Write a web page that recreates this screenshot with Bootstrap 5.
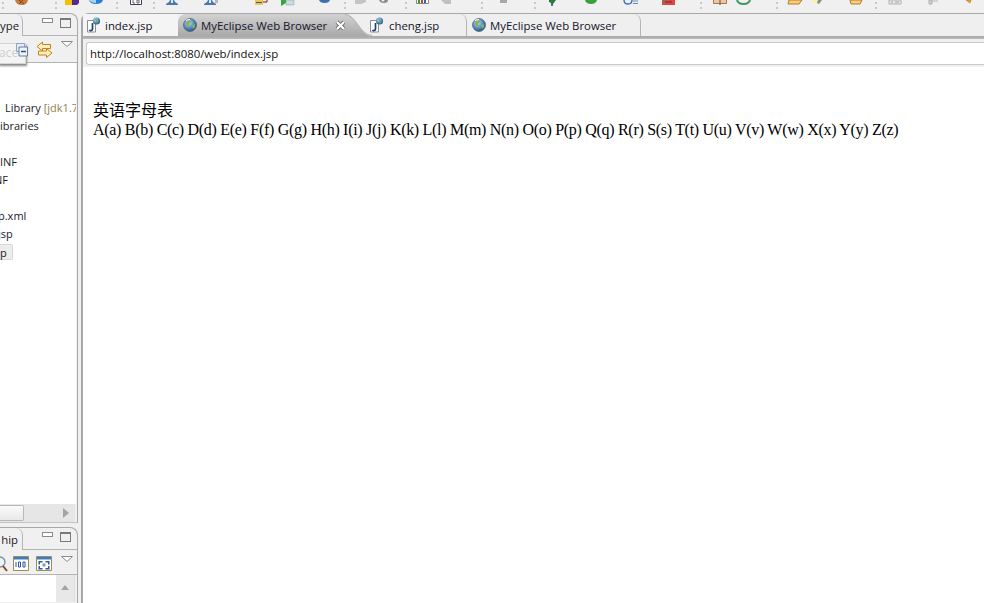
<!DOCTYPE html>
<html lang="en">
<head>
<meta charset="UTF-8">
<title>MyEclipse Web Browser</title>
<link href="https://cdn.jsdelivr.net/npm/bootstrap@5.3.0/dist/css/bootstrap.min.css" rel="stylesheet">
<style>
    html, body { height: 100%; }
    body { background: #f0f0f0; overflow: hidden; font-family: "Open Sans", "Liberation Sans", sans-serif; font-size: 11px; color: #1a1a2a; }
    .tool-strip { height: 13px; display: block; }
    .work-area { height: 590px; }

    /* left column, views */
    .left-col { width: 78px; }
    .view-pane { border: 1px solid #a8a8a8; border-left: 0; border-bottom: 0; border-top-right-radius: 8px; background: #f0f0f0; }
    .view-top { height: 510px; border-bottom: 1px solid #c4c4c4; }
    .view-bottom { margin-top: 4px; height: 76px; }
    .view-head { height: 22px; border-bottom: 1px solid #b4b4b4; }
    .view-tab { width: 23px; height: 22px; margin-bottom: -1px; background: #f0f0f0; border-right: 1px solid #b4b4b4; border-top-right-radius: 7px; line-height: 24px; font-size: 11.4px; overflow: hidden; position: relative; z-index: 1; }
    .min-btn { width: 11px; height: 5px; border: 1px solid #8a8a8a; background: #fff; margin-left: 19px; margin-top: 4px; }
    .max-btn { width: 11px; height: 10px; border: 1px solid #7a7a7a; border-top-width: 2px; margin-left: 7px; margin-top: 4px; }
    .view-tools { height: 27px; border-bottom: 1px solid #b4b4b4; position: relative; }
    .view-tools-low { height: 25px; }
    .sync-icon { position: absolute; left: 36px; top: 5px; }
    .drop-icon { position: absolute; left: 61px; top: 5px; }
    .float-box { position: absolute; left: -2px; top: 7px; width: 28px; height: 21px; background: #f4f4f4; border: 1px solid #d4d4d4; box-shadow: 1px 2px 2px #8a8a8a; color: #cfcfcf; line-height: 17px; font-size: 12px; z-index: 2; overflow: hidden; }
    .collapse-icon { position: absolute; left: 15px; top: 7px; z-index: 3; }
    .mini-icons { position: absolute; left: 0; top: 5px; }

    .tree-box { height: 441px; background: #fff; margin-right: 1px; padding-top: 36px; }
    .tree-row { height: 18px; line-height: 18px; white-space: nowrap; overflow: hidden; }
    .indent-a { padding-left: 5px; }
    .cut-1 { text-indent: -2px; }
    .cut-2 { text-indent: -6px; }
    .jdk-tag { color: #96804e; }
    .picked-row { display: inline-block; width: 13px; height: 16px; line-height: 15px; background: #ececec; border: 1px solid #d8d8d8; border-left: 0; border-radius: 0 2px 2px 0; vertical-align: top; margin-top: 1px; }
    .h-scroll { height: 18px; background: #e6e6e6; margin-right: 2px; position: relative; }
    .h-thumb { width: 24px; height: 16px; background: linear-gradient(#fafafa, #e8e8e8); border: 1px solid #b8b8b8; border-left: 0; border-radius: 0 2px 2px 0; }
    .h-arrow { width: 0; height: 0; border-left: 6px solid #a4a4a4; border-top: 5px solid transparent; border-bottom: 5px solid transparent; margin: 0 6px 0 auto; }
    .lower-box { height: 27px; background: #fff; margin-right: 2px; border-right: 1px solid #ddd; }
    .v-scroll { width: 18px; background: #e8e8e8; margin-left: auto; padding-top: 10px; }
    .v-arrow { width: 0; height: 0; border-bottom: 5px solid #a4a4a4; border-left: 4px solid transparent; border-right: 4px solid transparent; margin: 0 auto; }

    /* editor */
    .editor-pane { margin-left: 3px; width: 903px; border-top: 1px solid #a8a8a8; border-left: 2px solid #a8a8a8; border-top-left-radius: 8px; background: #fff; }
    .tab-row { height: 22px; background: #efefef; }
    .ed-tab { height: 22px; line-height: 20px; white-space: nowrap; font-size: 11.4px; color: #14142a; }
    .ed-tab span { padding-top: 2px; }
    .ed-tab svg { flex: none; }
    .tab-index { width: 95px; padding-left: 3px; gap: 4px; background: #f4f4f4; }
    .tab-active { width: 167px; padding-left: 5px; gap: 4px; background: linear-gradient(#d2d2d2, #a9a9a9); border-top-left-radius: 8px; }
    .tab-curve { width: 27px; height: 22px; display: block; }
    .tab-cheng { width: 98px; margin-left: -3px; gap: 5px; border-right: 1px solid #b4b4b4; border-top-right-radius: 7px; }
    .tab-web { width: 174px; padding-left: 5px; gap: 4px; border-right: 1px solid #b4b4b4; border-top-right-radius: 7px; }
    .close-x { margin-left: 4px; }
    .tab-band { height: 3px; background: linear-gradient(#a6a6a6, #bcbcbc); }
    .addr-wrap { height: 28px; padding: 3px 0 2px 3px; background: #f0f0f0; }
    .addr-field { height: 23px; background: #fff; border: 1px solid #cacaca; border-right: 0; border-radius: 3px 0 0 3px; line-height: 21px; padding-left: 3px; font-size: 11.4px; color: #111; }
    .page-view { padding: 34px 0 0 10px; font-family: "Liberation Serif", "Noto Sans CJK SC", serif; font-size: 16px; line-height: 19px; color: #000; white-space: nowrap; }
    .alpha-line { letter-spacing: -.3px; }
</style>
</head>
<body>
<svg width="0" height="0" class="position-absolute">
    <defs>
        <radialGradient id="globeFill" cx="40%" cy="35%" r="70%">
            <stop offset="0" stop-color="#bfe3f5"/><stop offset="0.6" stop-color="#4d86b8"/><stop offset="1" stop-color="#274f80"/>
        </radialGradient>
        <linearGradient id="activeFill" x1="0" y1="0" x2="0" y2="1">
            <stop offset="0" stop-color="#d2d2d2"/><stop offset="1" stop-color="#a9a9a9"/>
        </linearGradient>
        <symbol id="jspIcon" viewBox="0 0 15 16">
            <path d="M1.500 3.500h8v11.500h-8z" fill="#fff" stroke="#8d8d8d"/>
            <path d="M6.500 6v6q0 1.600-1.600 1.600-1 0-1.400-.8" fill="none" stroke="#1d3f7a" stroke-width="1.700"/>
            <circle cx="10.500" cy="4" r="3.600" fill="url(#globeFill)"/>
            <path d="M9 2.500l2 .5-1 2 1.500 1" fill="none" stroke="#6aa84f"/>
        </symbol>
        <symbol id="globeIcon" viewBox="0 0 14 14">
            <circle cx="7" cy="7" r="6.500" fill="url(#globeFill)" stroke="#4a5f78" stroke-width=".7"/>
            <path d="M4 3l3-1 1 2-2 2 1 2-2 1-2-3zM9 7l3-1 0 3-2 2z" fill="#8fae5a"/>
            <path d="M3 2.500Q5 1.500 7 1.500" stroke="#fff" fill="none"/>
        </symbol>
    </defs>
</svg>

<!-- main toolbar, only the bottom edge of its icons is on screen -->
<svg class="tool-strip" width="984" height="13" viewBox="0 0 984 13">
    <g fill="#c8c8c8">
        <path d="M2 2h2v2H2zM2 7h2v2H2zM55 2h2v2h-2zM55 7h2v2h-2zM116 2h2v2h-2zM116 7h2v2h-2zM153 2h2v2h-2zM153 7h2v2h-2zM344 2h2v2h-2zM344 7h2v2h-2zM405 2h2v2h-2zM405 7h2v2h-2zM481 2h2v2h-2zM481 7h2v2h-2zM534 2h2v2h-2zM534 7h2v2h-2zM700 2h2v2h-2zM700 7h2v2h-2zM776 2h2v2h-2zM776 7h2v2h-2zM875 2h2v2h-2zM875 7h2v2h-2z"/>
    </g>
    <path d="M15 0Q16 5 22 5 27 5 28 0z" fill="#c87a3a"/><path d="M19 0l5 4M23 0l-4 4" stroke="#7a4a2a"/>
    <path d="M65 0h7v5h-7z" fill="#f2c200"/><path d="M72 0h7v3l-2 2h-5z" fill="#5a2a8a"/>
    <path d="M89 0h14q-1 4-7 4-6 0-7-4z" fill="#2a7fd0"/><path d="M89 0h7v3q-5 0-7-3z" fill="#a8d4ef"/>
    <path d="M130.500 0v4.500h11V0" fill="#fff" stroke="#40405a"/><path d="M133 0v3h2M137 0h2v3h-2z" fill="none" stroke="#666"/>
    <path d="M170 0h4l1 2 3 2v1h-12v-1l3-2z" fill="#4c78b0"/><path d="M171 0h2v3h-2z" fill="#dce8f4"/>
    <path d="M208 0h4l1 2 3 2v1h-12v-1l3-2z" fill="#4c78b0"/><path d="M209 0h2v3h-2z" fill="#dce8f4"/><path d="M215 0h3v3h-3z" fill="#b8b8b8"/>
    <path d="M255 0h8v5h-8z" fill="#f0c850"/><path d="M256 2h6v1h-6z" fill="#2a5aa0"/><path d="M263 2h4V0" fill="none" stroke="#7a1a1a"/>
    <path d="M281 0v6l5-3V0z" fill="#2faa3a"/><path d="M286 0h8v5h-8z" fill="#cfd8e0" stroke="#8a9aa8" stroke-width=".5"/>
    <path d="M319 0h11q-1 3-5.500 3T319 0z" fill="#3d6eb4"/>
    <path d="M355 0v4h6l5-2V0z" fill="#c4c4c4"/>
    <path d="M379 0h9q0 3-4 3t-5-3z" fill="#8a8a8a"/><circle cx="383" cy="0" r="1.500" fill="#f0f0f0"/>
    <path d="M416.500 0v3.500h12V0" fill="#fff" stroke="#8a8a6a"/><path d="M418 0h2v3h-2z" fill="#2a9a3a"/><path d="M421 0h2v3h-2z" fill="#c83a3a"/><path d="M424 0h2v3h-2z" fill="#3a5ac8"/>
    <path d="M441 0h10v4h-6z" fill="#c0c0c0"/>
    <path d="M500 0h7v3h-7z" fill="#a8a8a8"/>
    <path d="M549 2l4 2 3-4h-7z" fill="#2a7a3a"/><path d="M552 3v3" stroke="#1a4a6a" stroke-width="1.500"/>
    <path d="M585 0h12q-1 4-6 4t-6-4z" fill="#3aa03a"/>
    <path d="M624 0q0 4 4 4t4-4" fill="none" stroke="#2a6ac0" stroke-width="1.300"/><path d="M633 1h5M633 3.500h5" stroke="#6a8ac0"/>
    <path d="M662 0h13v5h-13z" fill="#d84a4a"/><path d="M665 2h7" stroke="#8a2020"/><path d="M662 0h4v1h-4z" fill="#3a9a3a"/>
    <path d="M713.500 0v3.500h13V0" fill="#e8c8a8" stroke="#a87848"/><path d="M720 0v5" stroke="#7a4a2a"/>
    <path d="M737 0q1 4 6.500 4T750 0" fill="none" stroke="#3a9a5a" stroke-width="2"/>
    <path d="M789 0h13l-3 4h-11z" fill="#f8cf80" stroke="#b87820"/>
    <path d="M812 0h7l-3 3h-3z" fill="#fdf0a0"/><path d="M818 0h4l-3 4-2-1z" fill="#8a8a8a"/>
    <path d="M850 0h12l-2 4h-9z" fill="#f8cf80" stroke="#b87820"/>
    <path d="M889 0h12v4h-12z" fill="#e8e8e8" stroke="#b0b0b8"/><path d="M891 2h2M895 2h4" stroke="#a0a0a8"/>
    <path d="M929 0h3v4h-3z" fill="#cfcfcf" stroke="#b0b0b0"/><path d="M932 1h6" stroke="#b8b8b8"/>
    <path d="M966 0l4 3 1-3z" fill="#e8b030" stroke="#b87820" stroke-width=".7"/>
</svg>

<div class="work-area d-flex">
    <div class="left-col d-flex flex-column flex-shrink-0">
        <div class="view-pane view-top">
            <div class="view-head d-flex align-items-start">
                <div class="view-tab text-end pe-1">ype</div>
                <div class="min-btn"></div>
                <div class="max-btn"></div>
            </div>
            <div class="view-tools">
                <div class="float-box">ace</div>
                <svg class="collapse-icon" width="13" height="14" viewBox="0 0 13 14">
                    <path d="M1.500 .5h8v8h-8z" fill="#e4edf6" stroke="#8fa6c4"/>
                    <path d="M4 4h8.500v9H4z" fill="#eef3f9" stroke="#5f7ea8"/>
                    <path d="M6 8.500h5" stroke="#2c4f86" stroke-width="1.500"/>
                </svg>
                <svg class="sync-icon" width="17" height="17" viewBox="0 0 17 17">
                    <path d="M6.500 1L1 5.500 6.500 10V7.500h8v-4h-8z" fill="#fbeec0" stroke="#bf8412"/>
                    <path d="M10.500 7.500L16 12l-5.500 4.500V14h-8v-4h8z" fill="#fbeec0" stroke="#bf8412"/>
                </svg>
                <svg class="drop-icon" width="12" height="6" viewBox="0 0 12 6"><path d="M.5.5h11L6 5.500z" fill="#fff" stroke="#8a8a8a"/></svg>
            </div>
            <div class="tree-box">
                <div class="tree-row indent-a">Library <span class="jdk-tag">[jdk1.7</span></div>
                <div class="tree-row">ibraries</div>
                <div class="tree-row"></div>
                <div class="tree-row">INF</div>
                <div class="tree-row cut-2">NF</div>
                <div class="tree-row"></div>
                <div class="tree-row cut-1">p.xml</div>
                <div class="tree-row cut-1">jsp</div>
                <div class="tree-row"><span class="picked-row">p</span></div>
            </div>
            <div class="h-scroll d-flex align-items-center">
                <div class="h-thumb"></div>
                <div class="h-arrow"></div>
            </div>
        </div>
        <div class="view-pane view-bottom">
            <div class="view-head d-flex align-items-start">
                <div class="view-tab text-end pe-1">hip</div>
                <div class="min-btn"></div>
                <div class="max-btn"></div>
            </div>
            <div class="view-tools view-tools-low">
                <svg class="mini-icons" width="77" height="17" viewBox="0 0 77 17">
                    <circle cx="0" cy="7" r="5" fill="#eef3f8" stroke="#7a8a9a" stroke-width="1.300"/>
                    <path d="M3 11l4 5" stroke="#8a4a1a" stroke-width="2"/>
                    <path d="M13.500 1.500h15v14h-15z" fill="#fff" stroke="#a08a50"/><path d="M14 2h14v2.500H14z" fill="#3a7cc8"/>
                    <path d="M16 7v5M18.500 7h2v5h-2zM23 7h2v5h-2z" fill="none" stroke="#2a5a9a"/>
                    <path d="M36.500 1.500h15v14h-15z" fill="#fff" stroke="#a08a50"/><path d="M37 2h14v2.500H37z" fill="#3a7cc8"/>
                    <path d="M38.500 6h4v1.500h-2.500v2h-1.500zM49.500 6h-4v1.500h2.500v2h1.500zM38.500 14.500h4V13h-2.500v-2h-1.500zM49.500 14.500h-4V13h2.500v-2h1.500z" fill="#2a5a9a"/><path d="M42.500 8.500h3v3h-3z" fill="#7a9aca"/>
                    <path d="M61.500 1.500h11L67 6.500z" fill="#fff" stroke="#8a8a8a"/>
                </svg>
            </div>
            <div class="lower-box d-flex">
                <div class="v-scroll"><div class="v-arrow"></div></div>
            </div>
        </div>
    </div>

    <div class="editor-pane flex-shrink-0">
        <div class="tab-row d-flex">
            <div class="ed-tab tab-index d-flex align-items-center">
                <svg width="15" height="16"><use href="#jspIcon"/></svg>
                <span>index.jsp</span>
            </div>
            <div class="ed-tab tab-active d-flex align-items-center">
                <svg width="14" height="14"><use href="#globeIcon"/></svg>
                <span>MyEclipse Web Browser</span>
                <svg class="close-x" width="11" height="11" viewBox="0 0 11 11"><path d="M2 2l7 7M9 2l-7 7" stroke="#6f6f6f" stroke-width="4"/><path d="M2 2l7 7M9 2l-7 7" stroke="#fff" stroke-width="2.200"/></svg>
            </div>
            <svg class="tab-curve" viewBox="0 0 27 22" preserveAspectRatio="none">
                <path d="M0 0C11 0 15 22 27 22H0z" fill="url(#activeFill)"/>
                <path d="M0 .5C11 .5 15 21.500 27 21.500" fill="none" stroke="#b0b0b0"/>
            </svg>
            <div class="ed-tab tab-cheng d-flex align-items-center">
                <svg width="15" height="16"><use href="#jspIcon"/></svg>
                <span>cheng.jsp</span>
            </div>
            <div class="ed-tab tab-web d-flex align-items-center">
                <svg width="14" height="14"><use href="#globeIcon"/></svg>
                <span>MyEclipse Web Browser</span>
            </div>
        </div>
        <div class="tab-band"></div>
        <div class="addr-wrap">
            <div class="addr-field">http://localhost:8080/web/index.jsp</div>
        </div>
        <div class="page-view">
            <div>英语字母表</div>
            <div class="alpha-line">A(a) B(b) C(c) D(d) E(e) F(f) G(g) H(h) I(i) J(j) K(k) L(l) M(m) N(n) O(o) P(p) Q(q) R(r) S(s) T(t) U(u) V(v) W(w) X(x) Y(y) Z(z)</div>
        </div>
    </div>
</div>
<script src="https://cdn.jsdelivr.net/npm/bootstrap@5.3.0/dist/js/bootstrap.bundle.min.js"></script>
</body>
</html>
